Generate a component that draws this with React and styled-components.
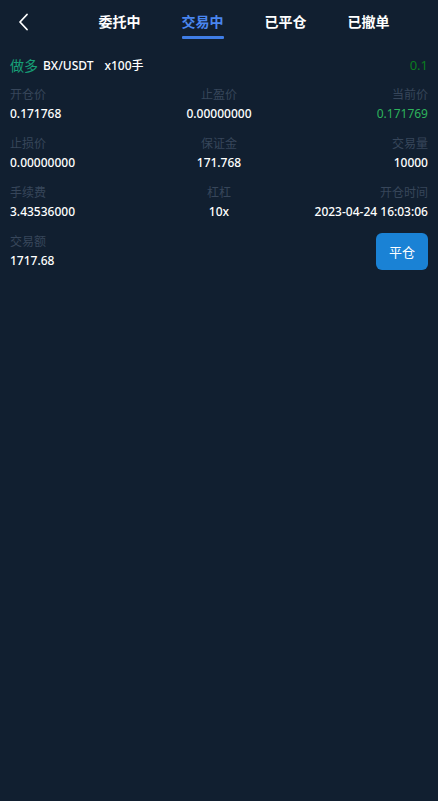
import React from "react";
import styled, { createGlobalStyle } from "styled-components";

const Global = createGlobalStyle`
  html, body { margin: 0; padding: 0; background: #111f30; }
  body { font-family: "Noto Sans", "Noto Sans CJK SC", sans-serif; }
  * { box-sizing: border-box; }
`;

const Page = styled.div`
  width: 438px;
  min-height: 801px;
  background: #111f30;
  color: #fff;
`;

const Header = styled.div`
  height: 44px;
  display: flex;
  align-items: stretch;
`;

const Back = styled.div`
  width: 78px;
  padding-left: 17px;
  display: flex;
  align-items: center;
`;

const Tabs = styled.div`
  display: flex;
`;

const Tab = styled.div`
  width: 83px;
  position: relative;
  display: flex;
  justify-content: center;
  align-items: center;
  padding-bottom: 2px;
  font-size: 14px;
  font-weight: 700;
  font-family: "Noto Sans CJK SC", sans-serif;
  color: ${(p) => (p.$active ? "#4a86ef" : "#ffffff")};
  &::after {
    content: "";
    display: ${(p) => (p.$active ? "block" : "none")};
    position: absolute;
    left: 50%;
    bottom: 5px;
    width: 42px;
    margin-left: -21px;
    height: 3px;
    border-radius: 1px;
    background: #3f7de6;
  }
`;

const TitleRow = styled.div`
  display: flex;
  align-items: center;
  padding: 10px 10px 0;
  height: 32px;
`;

const Side = styled.span`
  font-family: "Noto Sans CJK SC", sans-serif;
  font-size: 14px;
  color: #17a077;
  margin-right: 5px;
`;

const Pair = styled.span`
  font-size: 12px;
  font-weight: 500;
  color: #fff;
  margin-right: 11px;
`;

const Lever = styled.span`
  font-size: 12px;
  font-weight: 500;
  color: #fff;
`;

const Amount = styled.span`
  margin-left: auto;
  font-size: 13px;
  color: #0b7d1f;
`;

const Grid = styled.div`
  display: grid;
  grid-template-columns: 1fr 1fr 1fr;
  row-gap: 9px;
  padding: 8px 10px 0;
`;

const Cell = styled.div`
  display: flex;
  flex-direction: column;
  align-items: ${(p) => (p.$align === "center" ? "center" : p.$align === "right" ? "flex-end" : "flex-start")};
  justify-content: center;
  min-height: 40px;
`;

const Label = styled.div`
  font-family: "Noto Sans CJK SC", sans-serif;
  font-size: 12px;
  line-height: 20px;
  color: #37465a;
`;

const Value = styled.div`
  font-size: 12px;
  line-height: 20px;
  font-weight: 500;
  color: ${(p) => (p.$green ? "#2db35c" : "#ffffff")};
  ${(p) => (p.$green ? "font-weight: 400;" : "")}
`;

const Button = styled.button`
  width: 52px;
  height: 37px;
  border: none;
  border-radius: 6px;
  background: #1a82d5;
  color: #fff;
  font-family: "Noto Sans CJK SC", sans-serif;
  font-size: 13px;
  padding: 0;
`;

const cols = ["left", "center", "right"];

const rows = [
  [
    ["开仓价", "0.171768"],
    ["止盈价", "0.00000000"],
    ["当前价", "0.171769", true],
  ],
  [
    ["止损价", "0.00000000"],
    ["保证金", "171.768"],
    ["交易量", "10000"],
  ],
  [
    ["手续费", "3.43536000"],
    ["杠杠", "10x"],
    ["开仓时间", "2023-04-24 16:03:06"],
  ],
];

export default function App() {
  return (
    <Page>
      <Global />
      <Header>
        <Back>
          <svg width="14" height="18" viewBox="0 0 14 18">
            <path d="M10 1.5 L3 9 L10 16.5" fill="none" stroke="#fff" strokeWidth="1.8" strokeLinecap="round" strokeLinejoin="round" />
          </svg>
        </Back>
        <Tabs>
          <Tab>委托中</Tab>
          <Tab $active>交易中</Tab>
          <Tab>已平仓</Tab>
          <Tab>已撤单</Tab>
        </Tabs>
      </Header>
      <TitleRow>
        <Side>做多</Side>
        <Pair>BX/USDT</Pair>
        <Lever>x100手</Lever>
        <Amount>0.1</Amount>
      </TitleRow>
      <Grid>
        {rows.flat().map(([l, v, g], i) => (
          <Cell key={i} $align={cols[i % 3]}>
            <Label>{l}</Label>
            <Value $green={g}>{v}</Value>
          </Cell>
        ))}
        <Cell $align="left">
          <Label>交易额</Label>
          <Value>1717.68</Value>
        </Cell>
        <Cell />
        <Cell $align="right">
          <Button>平仓</Button>
        </Cell>
      </Grid>
    </Page>
  );
}
